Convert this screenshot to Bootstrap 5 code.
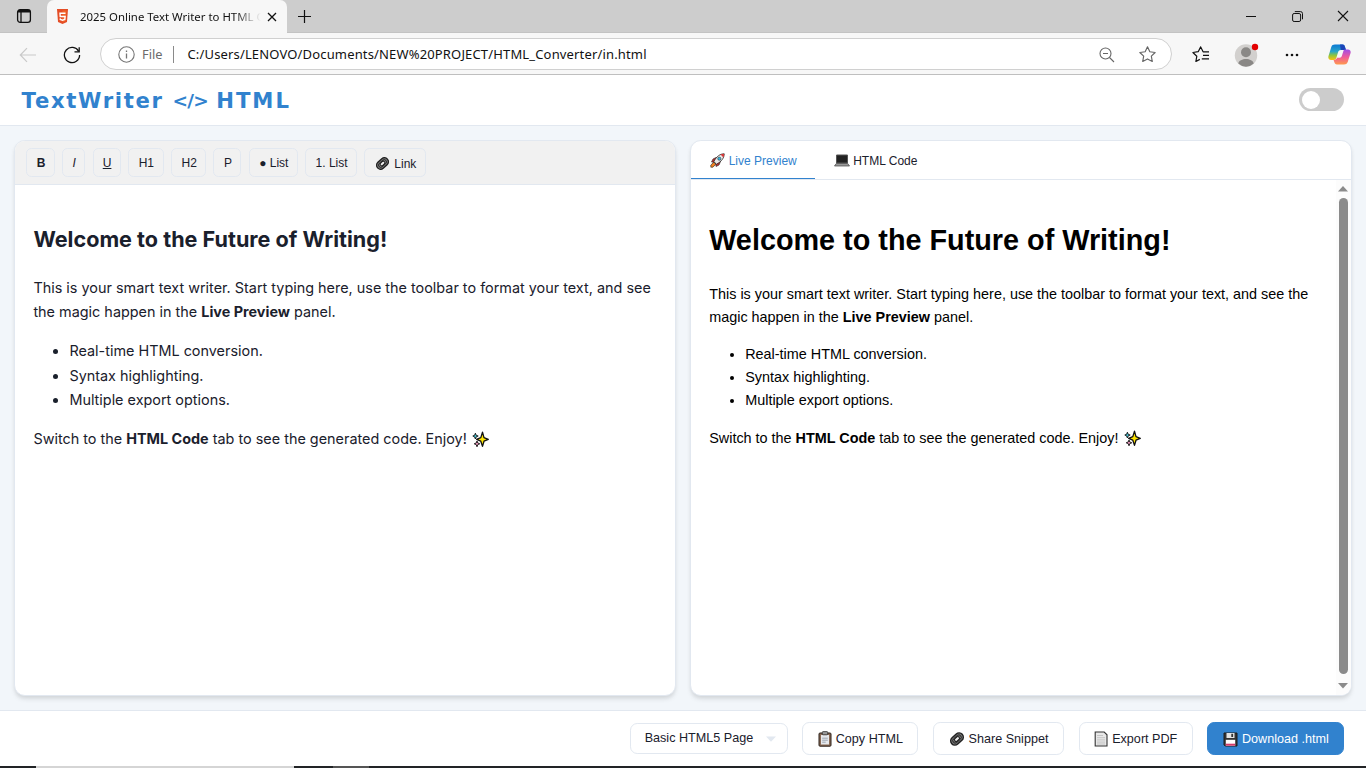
<!DOCTYPE html>
<html lang="en">
<head>
<meta charset="utf-8">
<meta name="viewport" content="width=device-width, initial-scale=1">
<title>2025 Online Text Writer to HTML Converter</title>
<link href="https://cdn.jsdelivr.net/npm/bootstrap@5.3.0/dist/css/bootstrap.min.css" rel="stylesheet">
<style>
  :root { --line: #e2e8f0; --ink: #1a202c; --accent: #3182ce; }
  html, body { height: 100%; }
  body { font-family: "Liberation Sans", sans-serif; font-size: 12px; color: var(--ink); background: #f2f6fa; overflow: hidden; }
  svg { display: block; flex: none; }
  .ui-font { font-family: "Noto Sans", "Open Sans", sans-serif; color: #111; }
  .window { height: 768px; }
  .titlebar { height: 33px; background: #cdcdcd; border-bottom: 1px solid #c3c3c3; }
  .tab-actions { width: 47px; padding-left: 16px; }
  .browser-tab { width: 240px; height: 33px; background: #f7f7f7; border-radius: 7px 7px 0 0; margin-bottom: -1px; padding: 0 10px 0 8px; }
  .tab-title { font-size: 11.4px; width: 181px; margin-left: 10px; white-space: nowrap; -webkit-mask-image: linear-gradient(90deg, #000 85%, transparent 100%); mask-image: linear-gradient(90deg, #000 85%, transparent 100%); }
  .new-tab { margin-left: 10px; }
  .window-controls { gap: 34.5px; padding-right: 17px; }
  .tool-row { height: 42px; background: #f7f7f7; border-bottom: 1px solid #bfbfbf; }
  .tool-row > svg { margin-top: 2px; }
  .address { width: 1072px; height: 32px; background: #fff; border: 1px solid #d0d0d0; border-radius: 16px; padding: 2px 15px 0 17px; margin-left: 19px; }
  .addr-file { font-size: 12.8px; color: #6b6b6b; margin-left: 7px; }
  .addr-rule { width: 1px; height: 17px; background: #8a8a8a; margin: 0 13px 0 11px; }
  .addr-url { font-size: 13px; letter-spacing: .155px; }
  .app-header { height: 51px; background: #fff; border-bottom: 1px solid var(--line); padding: 0 21.6px; }
  .brand { font-family: "DejaVu Sans", sans-serif; font-weight: 700; font-size: 21.2px; color: var(--accent); white-space: nowrap; padding-top: 2px; }
  .brand-word { letter-spacing: 1.65px; width: 151px; }
  .brand-mark { font-size: 18.5px; letter-spacing: -.8px; width: 43.6px; }
  .brand-tail { letter-spacing: 2px; }
  .theme-switch { width: 45px; height: 23px; border-radius: 12px; background: #ccc; padding: 0 3px; margin-top: -1px; }
  .theme-knob { width: 18px; height: 18px; border-radius: 50%; background: #fff; }
  .workspace { padding: 14.4px; gap: 14.4px; min-height: 0; }
  .panel { flex: 1 1 0; min-width: 0; background: #fff; border: 1px solid var(--line); border-radius: 10.8px; overflow: hidden; box-shadow: 0 3.6px 5.4px -1px rgba(0,0,0,.1), 0 2px 4px -1px rgba(0,0,0,.06); }
  .editor-bar { height: 44px; background: #f1f1f1; border-bottom: 1px solid var(--line); padding: 7px 10.6px; gap: 7.3px; }
  .tool { height: 29px; border: 1px solid var(--line); border-radius: 5.4px; color: var(--ink); white-space: nowrap; padding-left: 1px; }
  .tool-link { padding-top: 2px; }
  .editor-body { font-family: Inter, sans-serif; font-size: 14.4px; line-height: 1.7; padding: 18px; letter-spacing: .005px; }
  .editor-body h2 { font-size: 21.6px; line-height: 1.7; font-weight: 700; margin: 17.9px 0; }
  .doc p, .doc ul { margin: 0 0 14.4px; }
  .doc ul { padding-left: 36px; }
  .doc svg { display: inline-block; vertical-align: -4px; margin-left: 1px; }
  .view-tabs { height: 39px; border-bottom: 1px solid var(--line); }
  .view-tab { height: 38px; border-bottom: 1px solid transparent; padding-top: 2px; }
  .view-tab.on { color: var(--accent); border-color: var(--accent); width: 124px; }
  .code-tab { margin-left: 19px; gap: 3px; }
  .preview-body { color: #000; font-size: 14.4px; line-height: 1.6; padding: 17.5px 18px; min-width: 0; }
  .preview-body h1 { font-size: 28.8px; line-height: 1.6; font-weight: 700; margin: 19.3px 0; white-space: nowrap; }
  .scroll-rail { flex: none; width: 15px; background: #fcfcfc; padding: 6px 0; }
  .scroll-thumb { width: 9px; border-radius: 5px; background: #8b8b8b; margin: 6px 0 9px; }
  .app-footer { height: 56px; background: #fff; border-top: 1px solid var(--line); padding: 0 21.6px; gap: 14.7px; font-size: 12.6px; }
  .action { height: 33px; border: 1px solid var(--line); border-radius: 7.2px; white-space: nowrap; gap: 4px; padding-top: 1px; }
  .action.pick { width: 158px; height: 31px; padding: 0 11px 0 14px; }
  .action.main { background: var(--accent); border-color: var(--accent); color: #fff; }
  .taskbar { height: 2px; background: #222426; }
  .task-window { width: 258px; margin-left: 36px; background: #d5d5d5; }
  .task-item { width: 36px; margin-left: 39px; background: #555; }
</style>
</head>
<body>
<svg width="0" height="0" class="position-absolute" aria-hidden="true">
  <defs>
    <linearGradient id="cpA" x1="0" y1="0" x2="0" y2="1"><stop offset="0" stop-color="#0a78d4"/><stop offset=".45" stop-color="#2aa6c8"/><stop offset=".7" stop-color="#8ec53f"/><stop offset="1" stop-color="#ffc20e"/></linearGradient>
    <linearGradient id="cpB" x1="0" y1="0" x2="0" y2="1"><stop offset="0" stop-color="#a04be8"/><stop offset=".5" stop-color="#ef5a9a"/><stop offset="1" stop-color="#ff9a4d"/></linearGradient>
    <symbol id="i-link" viewBox="0 0 16 16"><g transform="rotate(-42 8 8)" fill="none"><rect x="1" y="3.800" width="14" height="8.400" rx="4.200" fill="#777" stroke="#222" stroke-width="1.500"/><rect x="3.100" y="5.600" width="9.800" height="4.800" rx="2.400" stroke="#222" stroke-width=".9"/><rect x="5.200" y="6.300" width="5.600" height="3.400" rx="1.700" fill="#eee" stroke="#222" stroke-width="1.100"/></g></symbol>
    <symbol id="i-sparkle" viewBox="0 0 17 17"><path d="M10.500 1.200 12 6.600 16.300 8.300 12 10.200 10.500 15.400 8.800 10.200 4.600 8.300 8.800 6.600Z" fill="#ffe500" stroke="#111" stroke-width="1.300" stroke-linejoin="round"/><path d="M3.400 2.200 4.200 4.300 6.200 5 4.200 5.900 3.400 8 2.600 5.900.8 5 2.600 4.300Z" fill="#45c5d8" stroke="#111" stroke-width=".9"/><path d="M5 10 5.800 12 7.800 12.800 5.800 13.600 5 15.800 4.200 13.600 2.200 12.800 4.200 12Z" fill="#f29ac0" stroke="#111" stroke-width=".9"/></symbol>
  </defs>
</svg>
<div class="window d-flex flex-column">
  <header class="ui-font">
    <div class="titlebar d-flex align-items-center">
      <div class="tab-actions"><svg width="16" height="16" viewBox="0 0 16 16" fill="none" stroke="#111" stroke-width="1.3"><rect x="1.600" y="1.600" width="12.800" height="12.800" rx="2.600"/><path d="M2 3.200h12" stroke-width="2.600"/><path d="M5 4v10.400"/></svg></div>
      <div class="browser-tab d-flex align-items-center">
        <svg width="15" height="17" viewBox="0 0 15 17"><path d="M2 1h11l-1 13-4.500 2L3 14Z" fill="#e44d26"/><path d="M7.500 2.500h4l-.8 10.500-3.200 1.300Z" fill="#f16529"/><path d="M10.500 5.200H5l.2 3.300h4.900l-.3 2.900-2.300.8-2.200-.8-.1-1" fill="none" stroke="#fff" stroke-width="1.400"/></svg>
        <div class="tab-title">2025 Online Text Writer to HTML C</div>
        <svg class="ms-auto" width="10" height="10" viewBox="0 0 10 10" stroke="#111" stroke-width="1.300"><path d="M1 1l8 8M9 1 1 9"/></svg>
      </div>
      <svg class="new-tab" width="15" height="15" viewBox="0 0 15 15" stroke="#111" stroke-width="1.200"><path d="M7.500 1v13M1 7.500h13"/></svg>
      <div class="window-controls ms-auto d-flex align-items-center">
        <svg width="12" height="12" viewBox="0 0 12 12" stroke="#111"><path d="M1 6.500h10"/></svg>
        <svg width="11" height="11" viewBox="0 0 11 11" fill="none" stroke="#111"><rect x=".6" y="2.500" width="8" height="8" rx="1.500"/><path d="M2.800.6h5.700a2 2 0 0 1 2 2v5.700"/></svg>
        <svg width="12" height="12" viewBox="0 0 12 12" stroke="#111" stroke-width="1.100"><path d="M1 1l10 10M11 1 1 11"/></svg>
      </div>
    </div>
    <div class="tool-row d-flex align-items-center">
      <svg style="margin-left:19px" width="18" height="16" viewBox="0 0 18 16" fill="none" stroke="#c9c9c9" stroke-width="1.200"><path d="M17 8H1.500M8 1.200 1.300 8 8 14.800"/></svg>
      <svg style="margin-left:26px" width="18" height="18" viewBox="0 0 18 18" fill="none" stroke="#111" stroke-width="1.300"><path d="M15.700 5.400A7.600 7.600 0 1 0 16.600 9"/><path d="M16.200 1.200v4.700h-4.700"/></svg>
      <div class="address d-flex align-items-center">
        <svg width="17" height="17" viewBox="0 0 17 17" fill="none" stroke="#767676" stroke-width="1.100"><circle cx="8.500" cy="8.500" r="7.700"/><path d="M8.500 7.500v5M8.500 4.500v1.400" stroke-width="1.300"/></svg>
        <span class="addr-file">File</span>
        <span class="addr-rule"></span>
        <span class="addr-url">C:/Users/LENOVO/Documents/NEW%20PROJECT/HTML_Converter/in.html</span>
        <svg class="ms-auto" width="16" height="16" viewBox="0 0 16 16" fill="none" stroke="#666" stroke-width="1.100"><circle cx="6.500" cy="6.500" r="5.500"/><path d="M10.500 10.500 15 15M4 6.500h5"/></svg>
        <svg style="margin-left:24px" width="17" height="17" viewBox="0 0 16 16" fill="none" stroke="#666" stroke-width="1.100" stroke-linejoin="round"><path d="M8 .8l2.200 4.600 5 .7-3.600 3.500.9 5L8 12.200l-4.500 2.400.9-5L.8 6.100l5-.7Z"/></svg>
      </div>
      <svg style="margin-left:20px" width="18" height="17" viewBox="0 0 18 17" fill="none" stroke="#111" stroke-width="1.200" stroke-linejoin="round"><path d="M11.200 5.900 8.700.9 6.200 5.700.9 6.500l3.900 3.700-.9 5.300 3.900-2.100M11 5.900h6M11 9.400h6M9.800 12.900h7.200"/></svg>
      <svg style="margin-left:24px" width="25" height="24" viewBox="0 0 25 24"><circle cx="12" cy="12.500" r="11.200" fill="#d2d0ce"/><circle cx="12" cy="9.300" r="5" fill="#8a8886"/><path d="M4.300 20.600c1-6.200 14.400-6.200 15.400 0a11.200 11.200 0 0 1-15.400 0Z" fill="#8a8886"/><circle cx="21" cy="4" r="3.200" fill="#e30000"/></svg>
      <svg style="margin-left:26px" width="14" height="4" viewBox="0 0 14 4" fill="#111"><circle cx="2" cy="2" r="1.300"/><circle cx="7" cy="2" r="1.300"/><circle cx="12" cy="2" r="1.300"/></svg>
      <svg style="margin-left:29px" width="23" height="21" viewBox="0 0 23 21"><path d="M7 .5h7.500c1.600 0 2 .8 2.500 2.500L18 6H13c-2 0-2.600 1-3 2.500L8.300 14c-.4 1.300-1.200 2-2.600 2H3C1 16-.2 14.300.5 12L3.300 3C3.900 1.200 5 .5 7 .5Z" fill="url(#cpA)"/><path d="M12 .5h2.500c1.600 0 2 .8 2.500 2.500L18 6h-5.200Z" fill="#1b44b8"/><path d="M16 20.500H9c-1.600 0-2.300-1-2.700-2.500L5.600 16c2.200 0 3-.9 3.400-2.200h2.500c1.400 0 2-.8 2.400-2L15.400 7c.3-1 1-1.500 2-1.500H20c2 0 3.100 1.600 2.500 3.800L19.700 18c-.6 1.700-1.800 2.500-3.700 2.500Z" fill="url(#cpB)"/></svg>
    </div>
  </header>

  <div class="app-header d-flex align-items-center justify-content-between">
    <div class="brand d-flex align-items-center"><span class="brand-word">TextWriter</span> <span class="brand-mark">&lt;/&gt;</span> <span class="brand-tail">HTML</span></div>
    <div class="theme-switch d-flex align-items-center"><div class="theme-knob"></div></div>
  </div>

  <main class="workspace d-flex flex-grow-1">
    <section class="panel d-flex flex-column">
      <div class="editor-bar d-flex">
        <div class="tool d-flex align-items-center justify-content-center" style="width:29px"><b>B</b></div>
        <div class="tool d-flex align-items-center justify-content-center" style="width:23px"><i>I</i></div>
        <div class="tool d-flex align-items-center justify-content-center" style="width:28px"><u>U</u></div>
        <div class="tool d-flex align-items-center justify-content-center" style="width:36px">H1</div>
        <div class="tool d-flex align-items-center justify-content-center" style="width:35px">H2</div>
        <div class="tool d-flex align-items-center justify-content-center" style="width:28px">P</div>
        <div class="tool d-flex align-items-center justify-content-center" style="width:49px">● List</div>
        <div class="tool d-flex align-items-center justify-content-center" style="width:52px">1. List</div>
        <div class="tool tool-link d-flex align-items-center justify-content-center gap-1" style="width:62px"><svg width="15" height="15"><use href="#i-link"/></svg>Link</div>
      </div>
      <div class="editor-body doc">
        <h2>Welcome to the Future of Writing!</h2>
        <p>This is your smart text writer. Start typing here, use the toolbar to format your text, and see the magic happen in the <b>Live Preview</b> panel.</p>
        <ul><li>Real-time HTML conversion.</li><li>Syntax highlighting.</li><li>Multiple export options.</li></ul>
        <p>Switch to the <b>HTML Code</b> tab to see the generated code. Enjoy! <svg width="17" height="17"><use href="#i-sparkle"/></svg></p>
      </div>
    </section>

    <section class="panel d-flex flex-column">
      <div class="view-tabs d-flex">
        <div class="view-tab on d-flex align-items-center justify-content-center gap-1">
          <svg width="15" height="15" viewBox="0 0 15 15"><path d="M3 6 6 4.500 8 6 5 9.500 1.500 9Z" fill="#c43131" stroke="#222" stroke-width=".6"/><path d="M9 12l1.500-3.500L9 7 5.500 10 6 13.500Z" fill="#c43131" stroke="#222" stroke-width=".6"/><path d="M14.200.8C10 .8 6.500 3.500 3.800 8.500L6.500 11.200C11.500 8.500 14.200 5 14.200.8Z" fill="#e8e8e8" stroke="#222" stroke-width=".8"/><path d="M14.200.8c-1.500 0-2.700.3-3.700.8l2.900 2.900c.5-1 .8-2.200.8-3.700Z" fill="#d63a3a"/><circle cx="9.300" cy="5.700" r="1.600" fill="#38b6e0" stroke="#222" stroke-width=".5"/><path d="M3.800 9.300.8 12v2.200H3l2.700-3Z" fill="#f5821f" stroke="#222" stroke-width=".6"/></svg>
          <span>Live Preview</span></div>
        <div class="view-tab code-tab d-flex align-items-center">
          <svg width="16" height="13" viewBox="0 0 16 13"><path d="M2.500 1h11v8h-11Z" fill="#222" stroke="#555"/><path d="M2.300 9.500h11.400L15.500 12H.5Z" fill="#999" stroke="#444" stroke-width=".7"/></svg>
          <span>HTML Code</span></div>
      </div>
      <div class="d-flex flex-grow-1">
        <div class="preview-body doc flex-grow-1">
          <h1>Welcome to the Future of Writing!</h1>
          <p>This is your smart text writer. Start typing here, use the toolbar to format your text, and see the magic happen in the <b>Live Preview</b> panel.</p>
          <ul><li>Real-time HTML conversion.</li><li>Syntax highlighting.</li><li>Multiple export options.</li></ul>
          <p>Switch to the <b>HTML Code</b> tab to see the generated code. Enjoy! <svg width="17" height="17"><use href="#i-sparkle"/></svg></p>
        </div>
        <div class="scroll-rail d-flex flex-column align-items-center">
          <svg width="10" height="6" viewBox="0 0 10 6" fill="#8b8b8b"><path d="M5 0l5 5.500H0Z"/></svg>
          <div class="scroll-thumb flex-grow-1"></div>
          <svg width="10" height="6" viewBox="0 0 10 6" fill="#8b8b8b"><path d="M0 0h10L5 5.500Z"/></svg>
        </div>
      </div>
    </section>
  </main>

  <footer class="app-footer d-flex align-items-center justify-content-end">
    <div class="action pick d-flex align-items-center justify-content-between"><span>Basic HTML5 Page</span><svg width="10" height="6" viewBox="0 0 10 6" fill="#e2e8f0"><path d="M0 .5h10L5 5.800Z"/></svg></div>
    <div class="action d-flex align-items-center justify-content-center" style="width:116px"><svg width="14" height="16" viewBox="0 0 14 16"><rect x="1" y="2" width="12" height="13.200" rx="1" fill="#8a6a55" stroke="#2b211b"/><path d="M3 4h8v9.500H3Z" fill="#e6e8ec"/><path d="M4.200 7.200h5.600M4.200 9.200h5.600M4.200 11.200h3.500" stroke="#8b95a5" stroke-width=".8"/><rect x="4.300" y=".6" width="5.400" height="3.200" rx=".8" fill="#999" stroke="#333" stroke-width=".8"/></svg><span>Copy HTML</span></div>
    <div class="action d-flex align-items-center justify-content-center" style="width:131px"><svg width="16" height="16"><use href="#i-link"/></svg><span>Share Snippet</span></div>
    <div class="action d-flex align-items-center justify-content-center" style="width:114px"><svg width="14" height="16" viewBox="0 0 14 16"><path d="M1.200 1h9L13 3.800V15H1.200Z" fill="#e8e8e8" stroke="#333" stroke-width="1.100"/><path d="M3 4.500h6M3 6.700h8M3 8.900h8M3 11.100h8M3 13h8" stroke="#bbb" stroke-width=".8"/></svg><span>Export PDF</span></div>
    <div class="action main d-flex align-items-center justify-content-center" style="width:137px"><svg width="15" height="15" viewBox="0 0 15 15"><path d="M1 1h13v13H2.200L1 12.800Z" fill="#333" stroke="#1c1c1c"/><rect x="3.500" y="1" width="8" height="5" fill="#e3e3e3"/><rect x="8.300" y="1.800" width="1.800" height="3.200" fill="#333"/><rect x="2.800" y="7.800" width="9.400" height="6" fill="#fff"/><path d="M2.800 12.700h9.400" stroke="#d23a6a" stroke-width="2"/></svg><span>Download .html</span></div>
  </footer>
  <div class="taskbar d-flex"><div class="task-window"></div><div class="task-item"></div></div>
</div>
<script src="https://cdn.jsdelivr.net/npm/bootstrap@5.3.0/dist/js/bootstrap.bundle.min.js"></script>
</body>
</html>
